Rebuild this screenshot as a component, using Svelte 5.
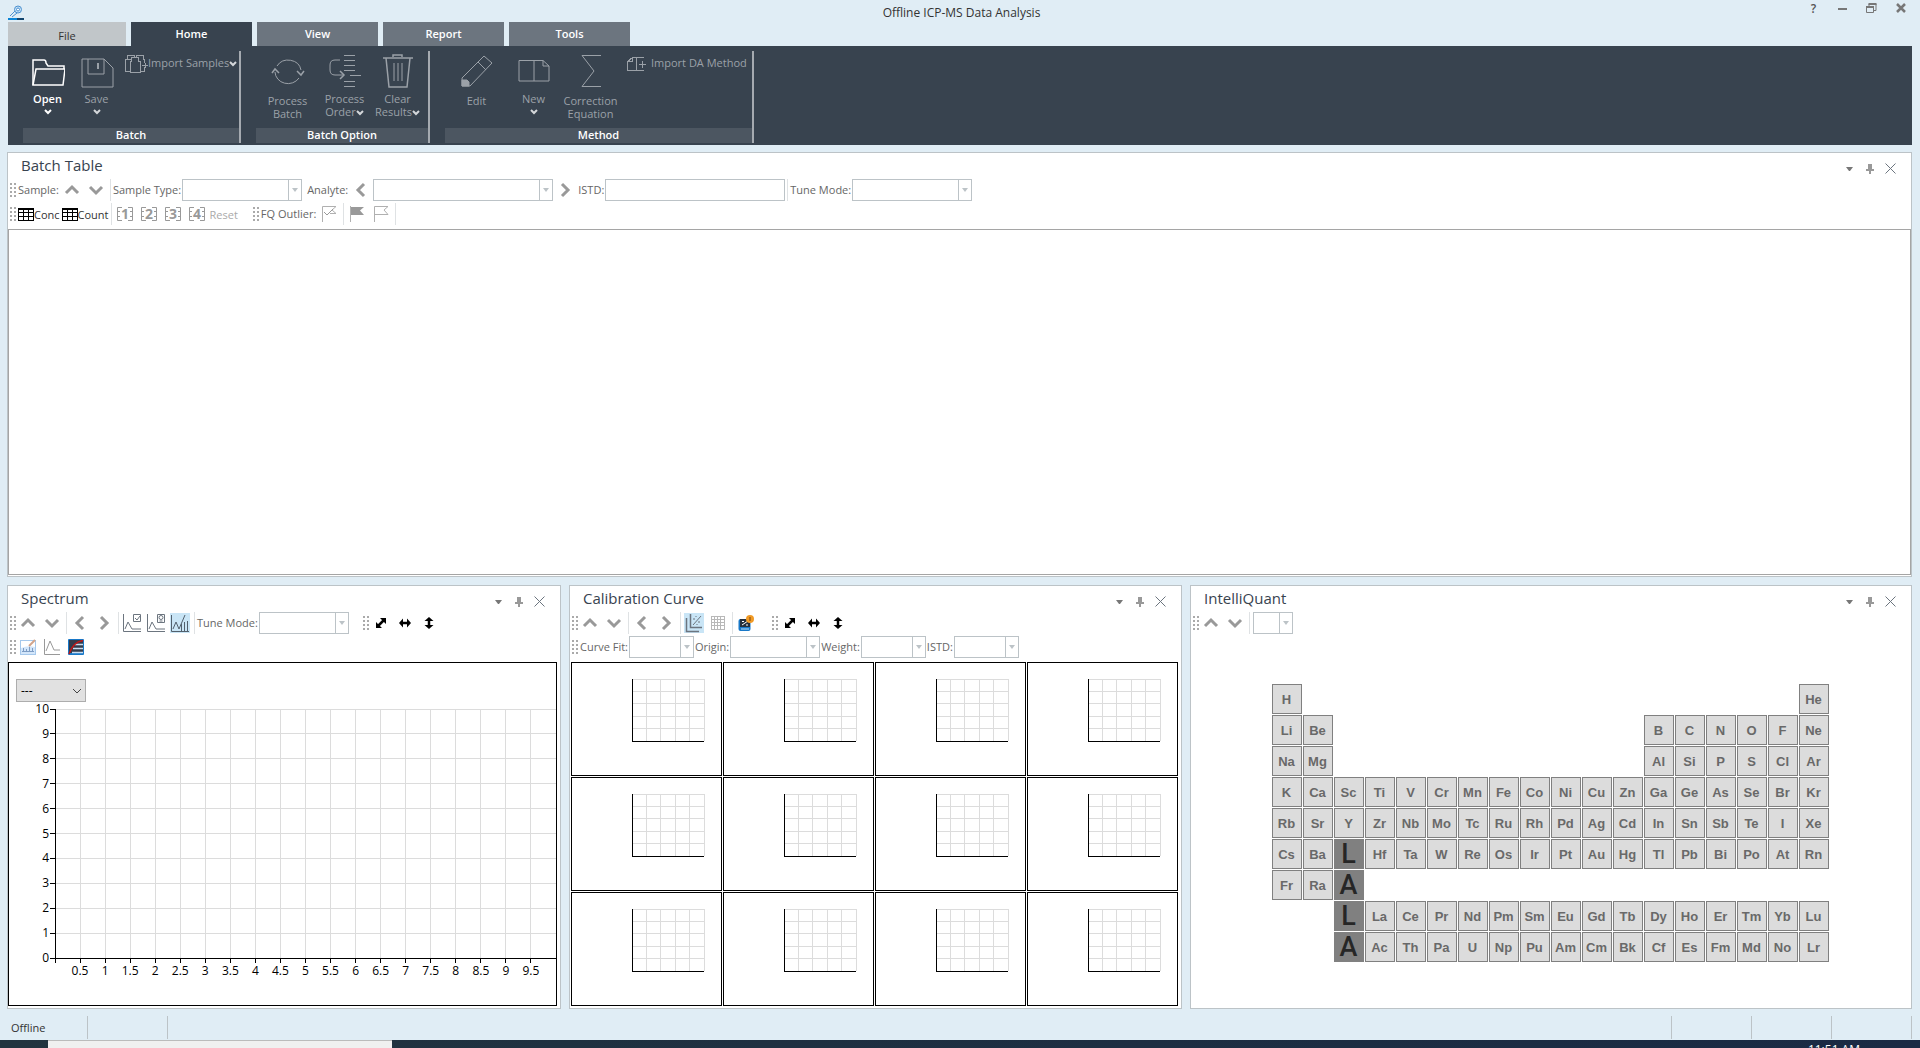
<script lang="ts">
  type Dir = "up" | "down" | "left" | "right";

  const tabs = ["Home", "View", "Report", "Tools"];
  let activeTab = $state("Home");

  const chevrons: Record<Dir, string> = {
    up: "M2 11 L8 5 L14 11",
    down: "M2 5 L8 11 L14 5",
    left: "M11 2 L5 8 L11 14",
    right: "M5 2 L11 8 L5 14",
  };

  // first column and symbols of every run in the periodic table
  const runs: [row: number, col: number, symbols: string][] = [
    [1, 1, "H"],
    [1, 18, "He"],
    [2, 1, "Li Be"],
    [2, 13, "B C N O F Ne"],
    [3, 1, "Na Mg"],
    [3, 13, "Al Si P S Cl Ar"],
    [4, 1, "K Ca Sc Ti V Cr Mn Fe Co Ni Cu Zn Ga Ge As Se Br Kr"],
    [5, 1, "Rb Sr Y Zr Nb Mo Tc Ru Rh Pd Ag Cd In Sn Sb Te I Xe"],
    [6, 1, "Cs Ba L Hf Ta W Re Os Ir Pt Au Hg Tl Pb Bi Po At Rn"],
    [7, 1, "Fr Ra A"],
    [8, 3, "L La Ce Pr Nd Pm Sm Eu Gd Tb Dy Ho Er Tm Yb Lu"],
    [9, 3, "A Ac Th Pa U Np Pu Am Cm Bk Cf Es Fm Md No Lr"],
  ];

  const elements = runs.flatMap(([row, col, symbols]) =>
    symbols.split(" ").map((symbol, i) => ({
      symbol,
      row,
      col: col + i,
      series: symbol === "L" || symbol === "A",
    })),
  );

  const yTicks = Array.from({ length: 11 }, (_, i) => i);
  const xTicks = Array.from({ length: 20 }, (_, i) => i / 2);
  const cells = Array.from({ length: 12 }, (_, i) => i);
  const fifths = [0, 20, 40, 60, 80, 100];
</script>

{#snippet caret()}
  <svg class="caret" viewBox="0 0 8 6" width="8" height="6">
    <path d="M1 1 L4 4 L7 1" fill="none" stroke="currentColor" stroke-width="2" />
  </svg>
{/snippet}

{#snippet grip()}
  <span class="grip"></span>
{/snippet}

{#snippet sep()}
  <span class="sep"></span>
{/snippet}

{#snippet arrow(dir: Dir, label: string)}
  <button class="tool" aria-label={label}>
    <svg viewBox="0 0 16 16" width="16" height="16">
      <path d={chevrons[dir]} fill="none" stroke="#999" stroke-width="3" />
    </svg>
  </button>
{/snippet}

{#snippet combo(id: string, label: string, size: string)}
  {#if label}
    <label class="tool-label" for={id}>{label}</label>
  {/if}
  <span class="combo {size}">
    <select {id} aria-label={label || "Sample"}></select>
    <span class="combo-arrow"></span>
  </span>
{/snippet}

{#snippet zoomTools()}
  <span class="grip spaced"></span>
  <button class="tool" aria-label="Autoscale">
    <svg viewBox="0 0 12 12" width="12" height="12">
      <path d="M5 1 H11 V7 Z M1 5 V11 H7 Z" />
      <path d="M3 9 L9 3" stroke="#000" stroke-width="2.5" />
    </svg>
  </button>
  <button class="tool" aria-label="Autoscale X">
    <svg viewBox="0 0 12 12" width="12" height="12">
      <path d="M0 6 L4 1.5 V10.5 Z M12 6 L8 1.5 V10.5 Z" />
      <path d="M3 6 H9" stroke="#000" stroke-width="2.5" />
    </svg>
  </button>
  <button class="tool" aria-label="Autoscale Y">
    <svg viewBox="0 0 12 12" width="12" height="12">
      <path d="M6 0 L10.5 4 H1.5 Z M6 12 L10.5 8 H1.5 Z" />
      <path d="M6 3 V9" stroke="#000" stroke-width="2.5" />
    </svg>
  </button>
{/snippet}

{#snippet header(title: string)}
  <header class="panel-header">
    <h2>{title}</h2>
    <button class="panel-btn" aria-label="Options">
      <svg viewBox="0 0 8 4" width="8" height="4"><path d="M0 0 H7 L4 4 H3 Z" fill="#777" /></svg>
    </button>
    <button class="panel-btn" aria-label="Pin">
      <svg viewBox="0 0 8 10" width="8" height="10">
        <path d="M2 0 H6 V5 H8 V7 H5 V10 H3 V7 H0 V5 H2 Z" fill="#999" />
      </svg>
    </button>
    <button class="panel-btn" aria-label="Close">
      <svg viewBox="0 0 11 11" width="11" height="11">
        <path d="M0.5 0.5 L10.5 10.5 M10.5 0.5 L0.5 10.5" stroke="#6c757f" fill="none" />
      </svg>
    </button>
  </header>
{/snippet}

{#snippet tableIcon()}
  <svg viewBox="0 0 16 13" width="16" height="13" shape-rendering="crispEdges">
    <path
      d="M0.5 0.5 H15.5 V12.5 H0.5 Z M0 1.5 H16 M0 4.5 H16 M0 8.5 H16 M5.5 1 V13 M10.5 1 V13"
      fill="none"
      stroke="#000"
    />
  </svg>
{/snippet}

<div class="app">
  <div class="titlebar">
    <svg class="app-icon" viewBox="0 0 16 16" width="16" height="16">
      <path d="M2 11 L7 6 M4 12 L9 8" stroke="#4a90cf" fill="none" />
      <circle cx="10" cy="4.5" r="3.5" stroke="#4a90cf" fill="#c7e2f6" />
      <circle cx="10" cy="4.5" r="1.5" stroke="#4a90cf" fill="#fff" />
      <path d="M0 13 H9 V15 H0 Z" fill="#0a84d6" />
      <path d="M9 13 H16 V15 H9 Z" fill="#12456e" />
    </svg>
    <h1>Offline ICP-MS Data Analysis</h1>
    <div class="window-buttons">
      <button>?</button>
      <button aria-label="Minimize">
        <svg viewBox="0 0 10 10" width="10" height="10"><path d="M0 5 H9 V7 H0 Z" fill="#777" /></svg>
      </button>
      <button aria-label="Restore">
        <svg viewBox="0 0 11 11" width="11" height="11">
          <path d="M3 3 V1 H10 V7.5 H8 M0.5 4 H7.5 V9.5 H0.5 Z" fill="none" stroke="#777" />
          <path d="M2.5 1 H10.5 M0 4 H8" stroke="#777" stroke-width="2" />
        </svg>
      </button>
      <button aria-label="Close">
        <svg viewBox="0 0 10 10" width="10" height="10">
          <path d="M1 1 L9 9 M9 1 L1 9" stroke="#777" stroke-width="2.5" />
        </svg>
      </button>
    </div>
  </div>

  <nav class="tabs">
    <button class="tab file">File</button>
    {#each tabs as tab}
      <button class="tab" class:active={tab === activeTab} onclick={() => (activeTab = tab)}>
        {tab}
      </button>
    {/each}
  </nav>

  <div class="ribbon">
    <section class="group batch">
      <div class="group-items">
        <button class="big narrow enabled">
          <svg viewBox="0 0 34 34" width="34" height="34" fill="none" stroke="currentColor">
            <path d="M2 31 V6 H13 Q15 6 15 9 L17 12 H33 V15" stroke-width="1.5" />
            <path d="M5 15 H34 L32 31 H2 Z" stroke-width="1.5" />
          </svg>
          <span>Open</span>
          {@render caret()}
        </button>
        <button class="big narrow">
          <svg viewBox="0 0 34 34" width="34" height="34" fill="none" stroke="currentColor">
            <path d="M2 5 H24 L33 14 V33 H2 Z M8 5 V20 H24 V5" />
            <path d="M18 9 V15" stroke-width="2" />
          </svg>
          <span>Save</span>
          {@render caret()}
        </button>
        <button class="small">
          <svg viewBox="0 0 24 20" width="24" height="20" fill="none" stroke="currentColor" shape-rendering="crispEdges">
            <path d="M3.5 5 V1.5 H10.5 V4 M1.5 17.5 V5.5 H7 M1.5 17.5 H6" />
            <path d="M12.5 4 V1.5 H19.5 V5 H20.5 V9" />
            <path d="M7.5 7 V3.5 H14.5 V7 L16.5 8 V18.5 H6.5 V8 Z M16 17.5 H20.5 V13" />
            <path d="M18 11.5 H24 M21.5 9 V14" />
          </svg>
          <span>Import Samples</span>
          {@render caret()}
        </button>
      </div>
      <h3>Batch</h3>
    </section>

    <section class="group option">
      <div class="group-items">
        <button class="big plain">
          <svg viewBox="0 0 34 34" width="34" height="34" fill="none" stroke="currentColor">
            <path d="M6 12 A13 12 0 0 1 30 16 M28 24 A13 12 0 0 1 4 18" />
            <path d="M1 19 L4 15 L8 19 M26 17 L30 21 L33 17" stroke-width="1.5" />
          </svg>
          <span>Process<br />Batch</span>
        </button>
        <button class="big">
          <svg viewBox="0 0 34 34" width="34" height="34" fill="none" stroke="currentColor">
            <path d="M12 6 H7 Q2 6 2 11 V16 Q2 21 7 21 H15" />
            <path d="M12 17 L16 21 L12 25" stroke-width="1.5" />
            <path d="M16 1.5 H27 M16 6.5 H27 M16 11.5 H27 M16 16.5 H27 M22 21.5 H33 M16 27.5 H27 M16 32.5 H27" />
          </svg>
          <span>Process<br />Order{@render caret()}</span>
        </button>
        <button class="big narrow">
          <svg viewBox="0 0 34 34" width="34" height="34" fill="none" stroke="currentColor">
            <path d="M2 4 H32 M12 3 V1 H21 V3 M5 4 L8 33 H26 L29 4" stroke-width="1.5" />
            <path d="M13 9 V27 M17 9 V27 M21 9 V27" />
          </svg>
          <span>Clear<br />Results{@render caret()}</span>
        </button>
      </div>
      <h3>Batch Option</h3>
    </section>

    <section class="group method">
      <div class="group-items">
        <button class="big plain">
          <svg viewBox="0 0 34 34" width="34" height="34" fill="none" stroke="currentColor">
            <path d="M2 32 V24 L24 2 L32 9 L10 32 Z M18 8 L26 16" />
            <path d="M2 32 V26 H7 L9 28 V32 Z" fill="currentColor" />
          </svg>
          <span>Edit</span>
        </button>
        <button class="big">
          <svg viewBox="0 0 34 34" width="34" height="34" fill="none" stroke="currentColor">
            <path d="M2 6.5 H26 L32 12 V27 H2 Z M17 6.5 V27 M26 6.5 V12 H32" />
          </svg>
          <span>New</span>
          {@render caret()}
        </button>
        <button class="big plain">
          <svg viewBox="0 0 34 34" width="34" height="34" fill="none" stroke="currentColor">
            <path d="M27 1.5 H8 L20 17 L8 32.5 H27" />
          </svg>
          <span>Correction<br />Equation</span>
        </button>
        <button class="small wide">
          <svg viewBox="0 0 20 16" width="20" height="16" fill="none" stroke="currentColor" shape-rendering="crispEdges">
            <path d="M17 1.5 H5.5 L0.5 5.5 V14.5 H17 M5.5 1.5 V5.5 H0.5 M9.5 1.5 V14.5" />
            <path d="M12 8.5 H19 M15.5 5 V12" />
          </svg>
          <span>Import DA Method</span>
        </button>
      </div>
      <h3>Method</h3>
    </section>
  </div>

  <main>
    <section class="panel">
      {@render header("Batch Table")}
      <div class="toolbars">
        <div class="toolbar">
          {@render grip()}
          <span class="tool-label">Sample:</span>
          {@render arrow("up", "Previous sample")}
          {@render arrow("down", "Next sample")}
          {@render sep()}
          {@render combo("sample-type", "Sample Type:", "w120")}
          <label class="tool-label after" for="analyte">Analyte:</label>
          {@render arrow("left", "Previous analyte")}
          <span class="combo w180">
            <select id="analyte"></select>
            <span class="combo-arrow"></span>
          </span>
          {@render arrow("right", "Next analyte")}
          <label class="tool-label" for="istd">ISTD:</label>
          <input id="istd" class="w180" type="text" />
          {@render sep()}
          {@render combo("batch-tune", "Tune Mode:", "w120")}
        </div>
        <div class="toolbar">
          {@render grip()}
          <button class="text-tool">{@render tableIcon()}Conc</button>
          <button class="text-tool">{@render tableIcon()}Count</button>
          {@render sep()}
          {#each [1, 2, 3, 4] as n}
            <button class="tool" aria-label="Layout {n}">
              <svg viewBox="0 0 16 20" width="16" height="20">
                <path
                  d="M5 3.5 H0.5 V16.5 H5 M11 3.5 H15.5 V16.5 H11 M0 7.5 H3 M0 12.5 H3 M13 7.5 H16 M13 12.5 H16"
                  fill="none"
                  stroke="#999"
                />
                <text x="8" y="15" class="digit">{n}</text>
              </svg>
            </button>
          {/each}
          <button class="text-tool muted">Reset</button>
          <span class="grip spaced"></span>
          <span class="tool-label">FQ Outlier:</span>
          <button class="tool" aria-label="Outlier check">
            <svg viewBox="0 0 16 16" width="16" height="16" fill="none" stroke="#b0b0b0">
              <path d="M1.5 16 V0.5 H15 L11 4 L15 7.5 H9" />
              <path d="M3 6 L6 9 L12 3" stroke="#999" />
            </svg>
          </button>
          {@render sep()}
          <button class="tool" aria-label="Flag on">
            <svg viewBox="0 0 16 16" width="16" height="16">
              <path d="M1.5 0 V16" stroke="#b0b0b0" />
              <path d="M2 1 H15 L11 4.5 L15 9 H2 Z" fill="#999" />
            </svg>
          </button>
          <button class="tool" aria-label="Flag off">
            <svg viewBox="0 0 16 16" width="16" height="16" fill="none" stroke="#b0b0b0">
              <path d="M1.5 16 V0.5 H15 L11 4 L15 8.5 H2" />
            </svg>
          </button>
          {@render sep()}
        </div>
      </div>
      <div class="batch-table"></div>
    </section>

    <div class="lower">
      <section class="panel">
        {@render header("Spectrum")}
        <div class="toolbars">
          <div class="toolbar">
            {@render grip()}
            {@render arrow("up", "Previous")}
            {@render arrow("down", "Next")}
            {@render sep()}
            {@render arrow("left", "Left")}
            {@render arrow("right", "Right")}
            {@render sep()}
            <button class="tool" aria-label="Select peaks">
              <svg viewBox="0 0 20 20" width="20" height="20" fill="none" stroke="#6c757f">
                <path d="M1.5 1 V18.5 H19 M3 16 L6 9 L10 16 H19 M11.5 1.5 H18.5 V8.5 H11.5 Z M13 5 L15 7 L18 3" />
              </svg>
            </button>
            <button class="tool" aria-label="Lock peaks">
              <svg viewBox="0 0 20 20" width="20" height="20" fill="none" stroke="#6c757f">
                <path d="M1.5 1 V18.5 H19 M3 16 L6 9 L10 16 H19 M11.5 1.5 H18.5 V9.5 H11.5 Z" />
                <circle cx="15" cy="4.5" r="2" />
                <path d="M13.5 8 H16.5" />
              </svg>
            </button>
            <button class="tool pressed" aria-label="Overlay spectrum">
              <svg viewBox="0 0 20 20" width="20" height="20" fill="none" stroke="#52606d">
                <path d="M1.5 2 V18.5 H19 M3 16 L6 9 L9 16 L15 2 M11.5 18 V11 M14.5 18 V9 M17.5 18 V8" />
              </svg>
            </button>
            {@render sep()}
            {@render combo("spectrum-tune", "Tune Mode:", "w90")}
            {@render zoomTools()}
          </div>
          <div class="toolbar">
            {@render grip()}
            <button class="tool" aria-label="Edit spectrum">
              <svg viewBox="0 0 16 16" width="16" height="16">
                <rect x="0.5" y="1.5" width="15" height="14" fill="#d3e6fa" stroke="#a5c8ec" />
                <path d="M1 2 H15 V8 Q8 6 1 9 Z" fill="#fff" />
                <path d="M2 12.5 H14 M3.5 9 V13 M6.5 10 V13 M9.5 8 V13 M12.5 9 V13" stroke="#7d9cc4" />
                <path d="M9 7 L15 1" stroke="#d2a58c" stroke-width="2" />
              </svg>
            </button>
            <button class="tool" aria-label="Peak">
              <svg viewBox="0 0 16 16" width="16" height="16" fill="none" stroke="#999">
                <path d="M0.5 0 V15.5 H16 M2 12 L6 2 L10 11 H16" />
              </svg>
            </button>
            <button class="tool" aria-label="Spectrum colors">
              <svg viewBox="0 0 16 16" width="16" height="16">
                <rect width="16" height="16" rx="1" fill="#1878c8" />
                <path d="M1 1 H15 V14 H1 Z" fill="#333c4d" />
                <path d="M7 5.5 H15 M5 9.5 H15 M4 13.5 H15" stroke="#c8dcf0" stroke-width="1.5" />
                <path d="M1 15 Q5 3 15 1.5" fill="none" stroke="#c01818" stroke-width="1.5" />
              </svg>
            </button>
          </div>
        </div>
        <div class="spectrum">
          <select class="spectrum-select" aria-label="Mass">
            <option>---</option>
          </select>
          <svg class="select-arrow" viewBox="0 0 10 6" width="10" height="6">
            <path d="M1 1 L5 5 L9 1" fill="none" stroke="#444" />
          </svg>
          <div class="plot">
            <svg class="axes" width="100%" height="100%">
              {#each yTicks as y}
                {@const pos = `${100 - y * 10}%`}
                <line class="gridline" x1="0" x2="100%" y1={pos} y2={pos} />
                <line class="axis" x1="-5" x2="0" y1={pos} y2={pos} />
                <text class="tick y" x="-6" y={pos} dy="4">{y}</text>
              {/each}
              {#each xTicks as x}
                {@const pos = `${x * 10}%`}
                <line class="gridline" x1={pos} x2={pos} y1="0" y2="100%" />
                <svg x={pos} y="100%" overflow="visible">
                  <line class="axis" y2="5" />
                </svg>
                {#if x > 0}
                  <text class="tick" x={pos} y="100%" dy="17">{x}</text>
                {/if}
              {/each}
              <line class="axis" x1="0" x2="0" y1="0" y2="100%" />
              <line class="axis" x1="0" x2="100%" y1="100%" y2="100%" />
            </svg>
          </div>
        </div>
      </section>

      <section class="panel">
        {@render header("Calibration Curve")}
        <div class="toolbars">
          <div class="toolbar">
            {@render grip()}
            {@render arrow("up", "Previous")}
            {@render arrow("down", "Next")}
            {@render sep()}
            {@render arrow("left", "Left")}
            {@render arrow("right", "Right")}
            {@render sep()}
            <button class="tool pressed" aria-label="Curve view">
              <svg viewBox="0 0 20 20" width="20" height="20" fill="none" stroke="#6c757f">
                <path d="M2.5 5 V18.5 H15 M6.5 1 V14.5 H18" stroke-width="1.5" />
                <path d="M9 12 L17 3 M10 5 V7 M12 3 V4 M15 8 V10 M13 11 V12" />
              </svg>
            </button>
            <button class="tool" aria-label="Grid view">
              <svg viewBox="0 0 15 15" width="15" height="15" shape-rendering="crispEdges">
                <path
                  d="M0.5 0 V14 M3.5 0 V14 M6.5 0 V14 M9.5 0 V14 M13.5 0 V14 M0 0.5 H14 M0 3.5 H14 M0 6.5 H14 M0 9.5 H14 M0 13.5 H14"
                  stroke="#b8b8b8"
                />
              </svg>
            </button>
            {@render sep()}
            <button class="tool" aria-label="Curve warnings">
              <svg viewBox="0 0 16 16" width="16" height="16">
                <rect x="0.5" y="4" width="12" height="12" rx="2" fill="#1878c8" />
                <path d="M2 4 H12 V12 H2 Z" fill="#26303c" />
                <path d="M3 14 H11" stroke="#bfe0fa" />
                <path d="M4 10 L10 6 M4 6.5 H6 M8 10 H10" stroke="#fff" />
                <circle cx="12" cy="4" r="4" fill="#f09a26" />
                <path d="M12 2 V6" stroke="#7a4308" />
              </svg>
            </button>
            {@render zoomTools()}
          </div>
          <div class="toolbar">
            {@render grip()}
            {@render combo("curve-fit", "Curve Fit:", "w65")}
            {@render combo("origin", "Origin:", "w90")}
            {@render combo("weight", "Weight:", "w65")}
            {@render combo("calibration-istd", "ISTD:", "w65")}
          </div>
        </div>
        <div class="curves">
          {#each cells as cell (cell)}
            <div class="curve">
              <svg class="axes" width="100%" height="100%">
                {#each fifths as f}
                  <line class="gridline" x1="{f}%" x2="{f}%" y1="0" y2="100%" />
                  <line class="gridline" x1="0" x2="100%" y1="{f}%" y2="{f}%" />
                {/each}
                <line class="axis" x1="0" x2="0" y1="0" y2="100%" />
                <line class="axis" x1="0" x2="100%" y1="100%" y2="100%" />
              </svg>
            </div>
          {/each}
        </div>
      </section>

      <section class="panel">
        {@render header("IntelliQuant")}
        <div class="toolbar">
          {@render grip()}
          {@render arrow("up", "Previous")}
          {@render arrow("down", "Next")}
          {@render sep()}
          {@render combo("quant-sample", "", "w40")}
        </div>
        <div class="periodic-wrap">
          <div class="periodic">
            {#each elements as el}
              <button
                class="element"
                class:series={el.series}
                style="grid-area: {el.row} / {el.col}"
              >
                {el.symbol}
              </button>
            {/each}
          </div>
        </div>
      </section>
    </div>
  </main>

  <footer class="statusbar">
    <span class="status first">Offline</span>
    <span class="status"></span>
    <span class="filler"></span>
    <span class="status"></span>
    <span class="status"></span>
    <span class="status"></span>
  </footer>

  <div class="taskbar">
    <span class="task"></span>
    <span class="clock">11:51 AM</span>
  </div>
</div>

<style>
  :global(body) {
    margin: 0;
  }

  .app {
    --line: #bcc3c7;
    --dark: #38434f;
    height: 100vh;
    display: flex;
    flex-direction: column;
    overflow: hidden;
    background: #e0edf5;
    color: #333;
    font-family: "Open Sans", sans-serif;
    font-size: 11px;
  }

  button,
  input,
  select {
    font: inherit;
    color: inherit;
    border: none;
    border-radius: 0;
    padding: 0;
    margin: 0;
    background: none;
    box-sizing: border-box;
  }

  button {
    cursor: pointer;
  }

  svg {
    display: block;
    flex-shrink: 0;
  }

  h1,
  h2,
  h3 {
    margin: 0;
    font-weight: normal;
  }

  /* title bar */
  .titlebar {
    display: grid;
    grid-template-columns: 1fr auto 1fr;
    align-items: center;
    height: 22px;
    padding: 0 5px 0 8px;
  }

  .app-icon {
    margin-top: 2px;
  }

  h1 {
    padding-top: 2px;
    font-size: 12px;
    line-height: 22px;
  }

  .window-buttons {
    display: flex;
    justify-content: flex-end;
    align-self: start;
  }

  .window-buttons button {
    width: 29px;
    height: 16px;
    display: flex;
    align-items: center;
    justify-content: center;
    font-size: 12px;
    font-weight: 600;
    color: #555;
  }

  /* tabs */
  .tabs {
    display: flex;
    gap: 5px;
    padding: 0 8px;
  }

  .tab {
    width: 121px;
    height: 24px;
    padding-bottom: 1px;
    background: #6c757f;
    color: #fff;
    font-weight: 600;
  }

  .tab.active {
    background: var(--dark);
  }

  .tab.file {
    width: 118px;
    padding-top: 3px;
    background: #c1c6c9;
    color: #333;
    font-weight: normal;
  }

  /* ribbon */
  .ribbon {
    display: flex;
    gap: 15px;
    margin: 0 8px;
    padding: 5px 0 2px 15px;
    background: var(--dark);
    color: #9ba1a8;
  }

  .group {
    height: 92px;
    display: flex;
    flex-direction: column;
    justify-content: space-between;
    border-right: 2px solid #a5aab0;
  }

  .group.batch {
    width: 216px;
  }

  .group.option {
    width: 172px;
  }

  .group.method {
    width: 307px;
  }

  .group-items {
    display: flex;
    align-items: flex-start;
    padding: 3px 0 0 3px;
  }

  .batch .group-items {
    padding-left: 0;
  }

  .group h3 {
    padding-bottom: 2px;
    background: #4c5661;
    color: #fff;
    font-size: 11px;
    font-weight: 600;
    line-height: 13px;
    text-align: center;
  }

  .big {
    width: 57px;
    display: flex;
    flex-direction: column;
    align-items: center;
    gap: 4px;
    line-height: 13px;
    white-space: nowrap;
  }

  .big.narrow {
    width: 49px;
  }

  .big.plain {
    gap: 6px;
  }

  .big.enabled {
    color: #fff;
    font-weight: 600;
  }

  .caret {
    color: #d4d7da;
  }

  .enabled .caret {
    color: #fff;
  }

  .big span .caret {
    display: inline-block;
    vertical-align: middle;
  }

  .small {
    display: flex;
    align-items: center;
    height: 20px;
    margin-left: 3px;
    line-height: 16px;
    white-space: nowrap;
  }

  .small span {
    padding-bottom: 2px;
  }

  .small.wide {
    gap: 4px;
    margin-left: 8px;
  }

  /* panels */
  main {
    flex: 1;
    min-height: 0;
    display: grid;
    grid-template-rows: 425fr 424fr;
    gap: 8px;
    padding: 7px 8px 7px 7px;
  }

  .lower {
    min-height: 0;
    display: grid;
    grid-template-columns: 554fr 613fr 722fr;
    gap: 8px;
  }

  .panel {
    display: flex;
    flex-direction: column;
    min-width: 0;
    min-height: 0;
    background: #fff;
    border: 1px solid var(--line);
  }

  .panel-header {
    display: flex;
    align-items: center;
    height: 26px;
    padding: 0 11px 0 13px;
  }

  h2 {
    flex: 1;
    padding-bottom: 2px;
    font-size: 15px;
    line-height: 24px;
    color: #38434f;
  }

  .panel-btn {
    width: 20px;
    height: 20px;
    margin-top: 5px;
    display: flex;
    align-items: center;
    justify-content: center;
  }

  .toolbars {
    display: flex;
    flex-direction: column;
    gap: 2px;
    padding-bottom: 4px;
  }

  .toolbar {
    display: flex;
    align-items: center;
    height: 22px;
    color: #666;
    white-space: nowrap;
  }

  .grip {
    width: 8px;
    height: 16px;
    flex-shrink: 0;
    background: radial-gradient(circle, #aaa 1px, transparent 1px) 1px 0 / 4px 4px;
  }

  .grip.spaced {
    margin-left: 12px;
  }

  .sep {
    width: 1px;
    height: 22px;
    margin: 0 1px 0 2px;
    background: #dfe2e4;
  }

  .tool {
    width: 24px;
    height: 20px;
    display: flex;
    align-items: center;
    justify-content: center;
  }

  .tool.pressed {
    background: #c9e5f6;
    background-clip: content-box;
    padding: 0 2px;
  }

  .tool-label {
    padding: 0 1px 1px;
  }

  .grip + .tool-label {
    padding-left: 2px;
  }

  .tool-label.after {
    padding-left: 5px;
  }

  .text-tool {
    display: flex;
    align-items: center;
    height: 20px;
    padding: 0 0 0 2px;
    color: #333;
  }

  .text-tool.muted {
    padding: 0 1px;
    color: #aaa;
  }

  .digit {
    font-size: 14px;
    font-weight: bold;
    fill: #999;
    text-anchor: middle;
  }

  .combo {
    display: grid;
    height: 22px;
  }

  .sep + .combo {
    margin-left: 2px;
  }

  .combo select {
    grid-area: 1 / 1;
    width: 100%;
    appearance: none;
    background: #fff;
    border: 1px solid var(--line);
  }

  .combo-arrow {
    grid-area: 1 / 1;
    justify-self: end;
    width: 13px;
    box-sizing: border-box;
    margin: 1px 1px 1px 0;
    border-left: 1px solid var(--line);
    display: flex;
    align-items: center;
    justify-content: center;
    pointer-events: none;
  }

  .combo-arrow::after {
    content: "";
    border: 3px solid transparent;
    border-top: 4px solid var(--line);
    border-bottom: none;
  }

  .w40 {
    width: 40px;
  }

  .w65 {
    width: 65px;
  }

  .w90 {
    width: 90px;
  }

  .w120 {
    width: 120px;
  }

  .w180 {
    width: 180px;
  }

  input {
    height: 22px;
    background: #fff;
    border: 1px solid var(--line);
  }

  .batch-table {
    flex: 1;
    margin-bottom: 1px;
    border: 1px solid #a5a5a5;
  }

  /* charts */
  .axes {
    overflow: visible;
    shape-rendering: crispEdges;
  }

  .gridline {
    stroke: #dcdcdc;
  }

  .axis {
    stroke: #000;
  }

  .tick {
    font-size: 12px;
    fill: #000;
    text-anchor: middle;
  }

  .tick.y {
    text-anchor: end;
  }

  .spectrum {
    flex: 1;
    min-height: 0;
    display: grid;
    grid-template: 23px 1fr / 70px 1fr;
    row-gap: 7px;
    margin: 0 3px 2px 0;
    padding: 16px 0 47px 7px;
    border: 1px solid #000;
  }

  .spectrum-select {
    grid-area: 1 / 1;
    appearance: none;
    padding: 0 4px;
    background: #e1e1e1;
    border: 1px solid #adadad;
    color: #000;
    font-size: 12px;
  }

  .select-arrow {
    grid-area: 1 / 1;
    place-self: center end;
    margin-right: 4px;
    pointer-events: none;
  }

  .plot {
    grid-area: 2 / 1 / 3 / 3;
    margin-left: 39px;
  }

  .curves {
    flex: 1;
    min-height: 0;
    display: grid;
    grid-template: repeat(3, 1fr) / repeat(4, 1fr);
    gap: 1px;
    margin: 0 3px 2px 1px;
  }

  .curve {
    min-height: 0;
    padding: 16px 17px 34px 60px;
    border: 1px solid #000;
  }

  /* periodic table */
  .periodic-wrap {
    flex: 1;
    display: flex;
    align-items: center;
    justify-content: center;
    padding: 4px 2px 0 0;
  }

  .periodic {
    display: grid;
    grid-template: repeat(9, 30px) / repeat(18, 30px);
    gap: 1px;
  }

  .element {
    background: #dcdcdc;
    border: 1px solid #808080;
    color: #696969;
    font-family: "Liberation Sans", sans-serif;
    font-size: 13px;
    font-weight: bold;
  }

  .element.series {
    background: #808080;
    color: #262626;
    font-family: Roboto, sans-serif;
    font-size: 27px;
    font-weight: 500;
    line-height: 28px;
  }

  /* status bar */
  .statusbar {
    display: flex;
    height: 24px;
    padding: 0 8px;
  }

  .status {
    width: 80px;
    height: 23px;
    box-sizing: border-box;
    border-right: 1px solid var(--line);
    line-height: 23px;
  }

  .status.first {
    padding-left: 3px;
  }

  .filler {
    flex: 1;
    border-right: 1px solid var(--line);
    height: 23px;
  }

  .taskbar {
    height: 8px;
    display: flex;
    justify-content: space-between;
    overflow: hidden;
    padding: 0 60px 0 48px;
    background: linear-gradient(90deg, #21343f, #1a2a44);
    color: #fff;
  }

  .task {
    width: 344px;
    background: #f0f0f0;
    border-top: 1px solid #bbb;
    box-sizing: border-box;
  }

  .clock {
    font-size: 12px;
    line-height: 20px;
  }
</style>
